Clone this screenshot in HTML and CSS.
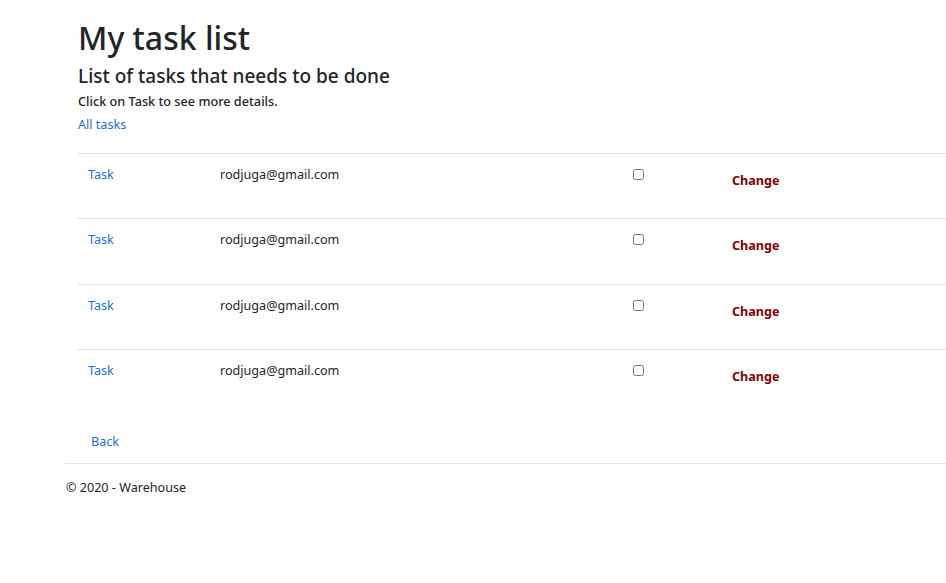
FILE: index.html
```html
<!DOCTYPE html>
<html lang="en">
<head>
<meta charset="utf-8">
<title>My task list</title>
<link rel="stylesheet" href="styles.css">
</head>
<body>
<div class="page">
  <main class="main">
    <h1 class="title">My task list</h1>
    <h4 class="subtitle">List of tasks that needs to be done</h4>
    <h6 class="hint">Click on Task to see more details.</h6>
    <a class="link all" href="#">All tasks</a>
    <div class="table">
      <div class="row">
        <div class="cell c1"><a class="link" href="#">Task</a></div>
        <div class="cell c2">rodjuga@gmail.com</div>
        <div class="cell c3"><input type="checkbox" class="check"></div>
        <div class="cell c4"><button class="change">Change</button></div>
      </div>
      <div class="row">
        <div class="cell c1"><a class="link" href="#">Task</a></div>
        <div class="cell c2">rodjuga@gmail.com</div>
        <div class="cell c3"><input type="checkbox" class="check"></div>
        <div class="cell c4"><button class="change">Change</button></div>
      </div>
      <div class="row">
        <div class="cell c1"><a class="link" href="#">Task</a></div>
        <div class="cell c2">rodjuga@gmail.com</div>
        <div class="cell c3"><input type="checkbox" class="check"></div>
        <div class="cell c4"><button class="change">Change</button></div>
      </div>
      <div class="row">
        <div class="cell c1"><a class="link" href="#">Task</a></div>
        <div class="cell c2">rodjuga@gmail.com</div>
        <div class="cell c3"><input type="checkbox" class="check"></div>
        <div class="cell c4"><button class="change">Change</button></div>
      </div>
    </div>
    <div class="back"><a class="link" href="#">Back</a></div>
  </main>
  <footer class="footer">&copy; 2020 - Warehouse</footer>
</div>
</body>
</html>
```

FILE: styles.css
```css
html, body {
  margin: 0;
  padding: 0;
  overflow: hidden;
  background: #fff;
}
body {
  font-family: "Noto Sans", "Open Sans", sans-serif;
  font-size: 12.6px;
  line-height: 20px;
  color: #212529;
}
.page {
  padding-left: 65px;
}
.main {
  padding-left: 13px;
}
.title {
  margin: 17px 0 0 0;
  font-size: 32px;
  line-height: 42px;
  font-weight: 500;
}
.subtitle {
  margin: 4px 0 0 0;
  font-size: 19px;
  line-height: 26px;
  font-weight: 500;
}
.hint {
  margin: 2px 0 0 0;
  font-size: 12.7px;
  line-height: 20px;
  font-weight: 500;
}
.link {
  color: #1a70d6;
  text-decoration: none;
}
.all {
  display: block;
  margin-top: 4px;
}
.table {
  margin-top: 18px;
}
.row {
  display: flex;
  height: 65.4px;
  border-top: 1px solid #dee2e6;
  box-sizing: border-box;
}
.cell {
  padding: 11px 10px 0 10px;
  box-sizing: border-box;
  flex: none;
}
.c1 { width: 132px; }
.c2 { width: 413px; }
.c3 { width: 99px; }
.c4 { width: 160px; }
.check {
  margin: 4px 0 0 0;
  width: 11px;
  height: 11px;
}
.change {
  margin: 6px 0 0 0;
  padding: 0;
  border: 0;
  background: none;
  font-family: inherit;
  font-size: 12.6px;
  line-height: 20px;
  font-weight: 700;
  color: #850000;
}
.back {
  padding: 17px 0 11px 13px;
}
.footer {
  border-top: 1px solid #e5e5e5;
  padding: 14px 0 0 1px;
  line-height: 20px;
}
```
